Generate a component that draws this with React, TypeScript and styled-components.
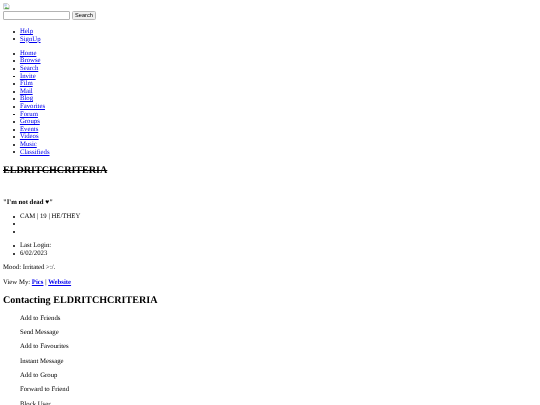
import React from "react";
import styled, { createGlobalStyle } from "styled-components";

const GlobalStyle = createGlobalStyle`
  html, body {
    margin: 0;
    height: 405px;
    overflow: hidden;
    background: #fff;
  }
  body {
    padding: 3.4px;
    box-sizing: border-box;
    font-family: "Liberation Serif", "Times New Roman", serif;
    font-size: 6.75px;
    line-height: 7.6px;
    color: #000;
    text-rendering: geometricPrecision;
  }
`;

const NAV_TOP = ["Help", "SignUp"];
const NAV_MAIN = [
  "Home", "Browse", "Search", "Invite", "Film", "Mail", "Blog",
  "Favorites", "Forum", "Groups", "Events", "Videos", "Music", "Classifieds",
];
const CONTACTS = [
  "Add to Friends", "Send Message", "Add to Favourites", "Instant Message",
  "Add to Group", "Forward to Friend", "Block User",
];

const App = () => {
  return (
    <Page>
      <GlobalStyle />
      <BrokenImage viewBox="0 0 16 16" aria-hidden="true">
        <path d="M1.5 1.5h9l4 4v9h-13z" fill="#fff" stroke="#a0a0a0" strokeWidth="1.4" />
        <path d="M3 14l4-5 3 3 2-2 2 3v1z" fill="#5aa650" />
        <path d="M3 3h6v5H3z" fill="#b9cdf0" />
      </BrokenImage>
      <SearchForm>
        <SearchInput type="text" />
        <SearchButton type="button">Search</SearchButton>
      </SearchForm>

      <List>
        {NAV_TOP.map((item) => (
          <Item key={item}><NavLink href="#">{item}</NavLink></Item>
        ))}
      </List>
      <List>
        {NAV_MAIN.map((item) => (
          <Item key={item}><NavLink href="#">{item}</NavLink></Item>
        ))}
      </List>

      <ProfileName>ELDRITCHCRITERIA</ProfileName>
      <Quote>"I'm not dead ♥"</Quote>

      <List>
        <Item>CAM | 19 | HE/THEY</Item>
        <EmptyItem />
        <EmptyItem />
      </List>
      <List>
        <Item>Last Login:</Item>
        <Item>6/02/2023</Item>
      </List>

      <Para>Mood: Irritated &gt;:/.</Para>
      <Para>
        View My: <BoldLink href="#">Pics</BoldLink> | <BoldLink href="#">Website</BoldLink>
      </Para>

      <SectionTitle>Contacting ELDRITCHCRITERIA</SectionTitle>
      <ContactList>
        {CONTACTS.map((item) => (
          <ContactItem key={item}>{item}</ContactItem>
        ))}
      </ContactList>
    </Page>
  );
};

const Page = styled.div`
  display: block;
  will-change: transform;
`;

const BrokenImage = styled.svg`
  display: block;
  width: 6.75px;
  height: 6.75px;
  margin-bottom: 1.6px;
`;

const SearchForm = styled.form`
  display: flex;
  align-items: center;
  gap: 1.7px;
  margin: 0 0 7.6px;
`;

const SearchInput = styled.input`
  width: 67px;
  height: 9px;
  padding: 0;
  box-sizing: border-box;
  border: 1px solid #b4b4b4;
  border-radius: 1px;
  background: #fff;
`;

const SearchButton = styled.button`
  width: 24.5px;
  height: 9px;
  padding: 0;
  box-sizing: border-box;
  border: 1px solid #b8b8b8;
  border-radius: 1.5px;
  background: #efefef;
  color: #000;
  font-family: "Liberation Sans", Arial, sans-serif;
  font-size: 5.6px;
  line-height: 7px;
`;

const List = styled.ul`
  margin: 6.75px 0;
  padding: 0 0 0 16.9px;
  list-style: none;
`;

const Item = styled.li`
  position: relative;
  min-height: 7.6px;

  &::before {
    content: "";
    position: absolute;
    left: -6.9px;
    top: 2.9px;
    width: 1.9px;
    height: 1.9px;
    border-radius: 50%;
    background: #000;
  }
`;

const EmptyItem = styled(Item)``;

const NavLink = styled.a`
  color: #0000ee;
  text-decoration: underline;
`;

const BoldLink = styled(NavLink)`
  font-weight: 700;
`;

const ProfileName = styled.h2`
  margin: 8.4px 0;
  font-size: 10.1px;
  line-height: 11.6px;
  font-weight: 700;
  text-decoration: line-through;
`;

const Quote = styled.p`
  margin: 22.4px 0 6.75px;
  font-weight: 700;
`;

const Para = styled.p`
  margin: 6.75px 0;
`;

const SectionTitle = styled.h2`
  margin: 8.4px 0;
  font-size: 10.1px;
  line-height: 11.6px;
  font-weight: 700;
`;

const ContactList = styled.div`
  padding-left: 16.9px;
`;

const ContactItem = styled.p`
  margin: 6.75px 0;
`;

export default App;
